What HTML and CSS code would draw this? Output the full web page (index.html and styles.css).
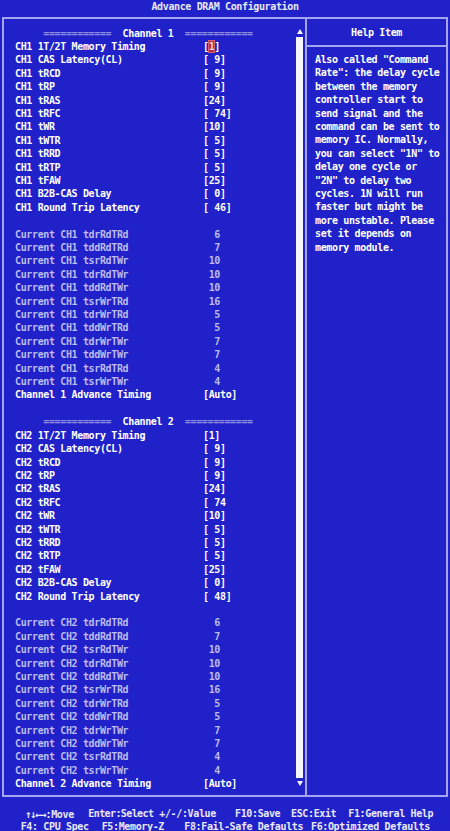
FILE: index.html
```html
<!DOCTYPE html>
<html>
<head>
<meta charset="utf-8">
<link rel="stylesheet" href="styles.css">
</head>
<body>
<div class="title">Advance DRAM Configuration</div>
<div class="frame">
  <div class="main">
    <div class="list">
      <div class="row"><span class="eq">     ============  </span><span>Channel 1</span><span class="eq">  ============</span></div>
      <div class="row"><span class="label">CH1 1T/2T Memory Timing</span><span class="val">[<span class="sel">1</span>]</span></div>
      <div class="row"><span class="label">CH1 CAS Latency(CL)</span><span class="val">[ 9]</span></div>
      <div class="row"><span class="label">CH1 tRCD</span><span class="val">[ 9]</span></div>
      <div class="row"><span class="label">CH1 tRP</span><span class="val">[ 9]</span></div>
      <div class="row"><span class="label">CH1 tRAS</span><span class="val">[24]</span></div>
      <div class="row"><span class="label">CH1 tRFC</span><span class="val">[ 74]</span></div>
      <div class="row"><span class="label">CH1 tWR</span><span class="val">[10]</span></div>
      <div class="row"><span class="label">CH1 tWTR</span><span class="val">[ 5]</span></div>
      <div class="row"><span class="label">CH1 tRRD</span><span class="val">[ 5]</span></div>
      <div class="row"><span class="label">CH1 tRTP</span><span class="val">[ 5]</span></div>
      <div class="row"><span class="label">CH1 tFAW</span><span class="val">[25]</span></div>
      <div class="row"><span class="label">CH1 B2B-CAS Delay</span><span class="val">[ 0]</span></div>
      <div class="row"><span class="label">CH1 Round Trip Latency</span><span class="val">[ 46]</span></div>
      <div class="row"></div>
      <div class="row dim"><span class="label">Current CH1 tdrRdTRd</span><span class="val">  6</span></div>
      <div class="row dim"><span class="label">Current CH1 tddRdTRd</span><span class="val">  7</span></div>
      <div class="row dim"><span class="label">Current CH1 tsrRdTWr</span><span class="val"> 10</span></div>
      <div class="row dim"><span class="label">Current CH1 tdrRdTWr</span><span class="val"> 10</span></div>
      <div class="row dim"><span class="label">Current CH1 tddRdTWr</span><span class="val"> 10</span></div>
      <div class="row dim"><span class="label">Current CH1 tsrWrTRd</span><span class="val"> 16</span></div>
      <div class="row dim"><span class="label">Current CH1 tdrWrTRd</span><span class="val">  5</span></div>
      <div class="row dim"><span class="label">Current CH1 tddWrTRd</span><span class="val">  5</span></div>
      <div class="row dim"><span class="label">Current CH1 tdrWrTWr</span><span class="val">  7</span></div>
      <div class="row dim"><span class="label">Current CH1 tddWrTWr</span><span class="val">  7</span></div>
      <div class="row dim"><span class="label">Current CH1 tsrRdTRd</span><span class="val">  4</span></div>
      <div class="row dim"><span class="label">Current CH1 tsrWrTWr</span><span class="val">  4</span></div>
      <div class="row"><span class="label">Channel 1 Advance Timing</span><span class="val">[Auto]</span></div>
      <div class="row"></div>
      <div class="row"><span class="eq">     ============  </span><span>Channel 2</span><span class="eq">  ============</span></div>
      <div class="row"><span class="label">CH2 1T/2T Memory Timing</span><span class="val">[1]</span></div>
      <div class="row"><span class="label">CH2 CAS Latency(CL)</span><span class="val">[ 9]</span></div>
      <div class="row"><span class="label">CH2 tRCD</span><span class="val">[ 9]</span></div>
      <div class="row"><span class="label">CH2 tRP</span><span class="val">[ 9]</span></div>
      <div class="row"><span class="label">CH2 tRAS</span><span class="val">[24]</span></div>
      <div class="row"><span class="label">CH2 tRFC</span><span class="val">[ 74</span></div>
      <div class="row"><span class="label">CH2 tWR</span><span class="val">[10]</span></div>
      <div class="row"><span class="label">CH2 tWTR</span><span class="val">[ 5]</span></div>
      <div class="row"><span class="label">CH2 tRRD</span><span class="val">[ 5]</span></div>
      <div class="row"><span class="label">CH2 tRTP</span><span class="val">[ 5]</span></div>
      <div class="row"><span class="label">CH2 tFAW</span><span class="val">[25]</span></div>
      <div class="row"><span class="label">CH2 B2B-CAS Delay</span><span class="val">[ 0]</span></div>
      <div class="row"><span class="label">CH2 Round Trip Latency</span><span class="val">[ 48]</span></div>
      <div class="row"></div>
      <div class="row dim"><span class="label">Current CH2 tdrRdTRd</span><span class="val">  6</span></div>
      <div class="row dim"><span class="label">Current CH2 tddRdTRd</span><span class="val">  7</span></div>
      <div class="row dim"><span class="label">Current CH2 tsrRdTWr</span><span class="val"> 10</span></div>
      <div class="row dim"><span class="label">Current CH2 tdrRdTWr</span><span class="val"> 10</span></div>
      <div class="row dim"><span class="label">Current CH2 tddRdTWr</span><span class="val"> 10</span></div>
      <div class="row dim"><span class="label">Current CH2 tsrWrTRd</span><span class="val"> 16</span></div>
      <div class="row dim"><span class="label">Current CH2 tdrWrTRd</span><span class="val">  5</span></div>
      <div class="row dim"><span class="label">Current CH2 tddWrTRd</span><span class="val">  5</span></div>
      <div class="row dim"><span class="label">Current CH2 tdrWrTWr</span><span class="val">  7</span></div>
      <div class="row dim"><span class="label">Current CH2 tddWrTWr</span><span class="val">  7</span></div>
      <div class="row dim"><span class="label">Current CH2 tsrRdTRd</span><span class="val">  4</span></div>
      <div class="row dim"><span class="label">Current CH2 tsrWrTWr</span><span class="val">  4</span></div>
      <div class="row"><span class="label">Channel 2 Advance Timing</span><span class="val">[Auto]</span></div>
    </div>
    <div class="scroll">
      <div class="arrow-up"></div>
      <div class="bar"></div>
      <div class="arrow-down"></div>
    </div>
  </div>
  <div class="help">
    <div class="help-head">Help Item</div>
    <div class="help-body">
      <div class="hl">Also called "Command</div>
      <div class="hl">Rate": the delay cycle</div>
      <div class="hl">between the memory</div>
      <div class="hl">controller start to</div>
      <div class="hl">send signal and the</div>
      <div class="hl">command can be sent to</div>
      <div class="hl">memory IC. Normally,</div>
      <div class="hl">you can select "1N" to</div>
      <div class="hl">delay one cycle or</div>
      <div class="hl">"2N" to delay two</div>
      <div class="hl">cycles. 1N will run</div>
      <div class="hl">faster but might be</div>
      <div class="hl">more unstable. Please</div>
      <div class="hl">set it depends on</div>
      <div class="hl">memory module.</div>
    </div>
  </div>
</div>
<div class="footer">
  <div class="fline line1"><span class="k1"><span class="arr">↑↓←→</span>:Move</span><span class="k2">Enter:Select</span><span class="k3">+/-/:Value</span><span class="k4">F10:Save</span><span class="k5">ESC:Exit</span><span>F1:General Help</span></div>
  <div class="fline line2"><span class="m1">F4: CPU Spec</span><span class="m2">F5:Memory-Z</span><span class="m3">F8:Fail-Safe Defaults</span><span>F6:Optimized Defaults</span></div>
</div>
</body>
</html>
```
FILE: styles.css
```css
* { box-sizing: border-box; }
html, body { margin: 0; padding: 0; }
body {
  width: 450px;
  height: 831px;
  overflow: hidden;
  background: #2121c9;
  color: #ffffff;
  font-family: "DejaVu Sans Mono", monospace;
  font-weight: bold;
  font-size: 10px;
  letter-spacing: -0.36px;
}
.title {
  height: 17px;
  line-height: 13px;
  text-align: center;
  color: #e8e8f6;
}
.frame {
  margin: 0 2px;
  height: 780px;
  border: 2px solid #a4a4f0;
  display: flex;
}
.main {
  width: 301px;
  display: flex;
}
.list {
  flex: 1;
  padding: 7.5px 0 0 11px;
}
.row {
  display: flex;
  height: 13.41px;
  line-height: 13.41px;
  white-space: pre;
}
.label { width: 188px; }
.val { white-space: pre; }
.dim { color: #bcbcee; }
.eq { color: #8c8ce0; }
.sel {
  background: #b42c48;
  color: #f4d0d8;
  outline: 1px solid #d86070;
}
.scroll {
  width: 9px;
  margin-right: 1px;
  display: flex;
  flex-direction: column;
  align-items: center;
  padding: 10px 0 9px;
}
.arrow-up {
  width: 0; height: 0;
  border-left: 3px solid transparent;
  border-right: 3px solid transparent;
  border-bottom: 5px solid #f4f4fa;
}
.arrow-down {
  width: 0; height: 0;
  border-left: 3px solid transparent;
  border-right: 3px solid transparent;
  border-top: 5px solid #f4f4fa;
}
.bar {
  flex: 1;
  width: 7px;
  margin: 3px 0;
  background: #f6f6fa;
}
.help {
  flex: 1;
  border-left: 2px solid #a4a4f0;
}
.help-head {
  height: 28px;
  padding-top: 1px;
  line-height: 26px;
  text-align: center;
  border-bottom: 2px solid #a4a4f0;
}
.help-body {
  padding: 6px 0 0 8px;
}
.hl {
  height: 13.41px;
  line-height: 13.41px;
  white-space: pre;
}
.footer {
  padding-top: 10.5px;
  line-height: 12.4px;
  color: #e8e8f8;
}
.fline {
  display: flex;
  white-space: pre;
}
.line1 { padding-left: 25px; }
.line2 { padding-left: 20.7px; }
.arr { letter-spacing: -1.2px; font-size: 10.5px; }
.k1 { width: 63.3px; }
.k2 { width: 71px; letter-spacing: -0.6px; }
.k3 { width: 75.7px; }
.k4 { width: 56px; }
.k5 { width: 57.3px; }
.m1 { width: 81px; }
.m2 { width: 82.6px; }
.m3 { width: 126.7px; }
```
